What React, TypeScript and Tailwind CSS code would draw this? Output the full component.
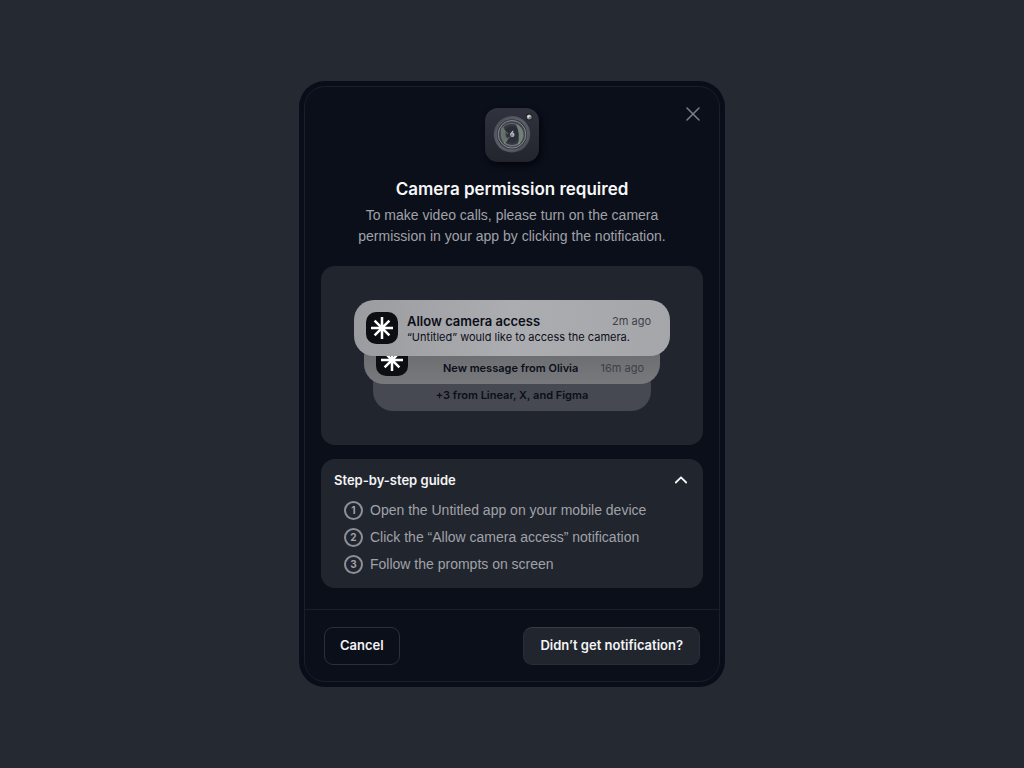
import { useState } from "react";

const steps = [
  "Open the Untitled app on your mobile device",
  "Click the “Allow camera access” notification",
  "Follow the prompts on screen",
];

function CameraIcon() {
  return (
    <svg viewBox="0 0 54 54" className="size-full" aria-hidden="true">
      <defs>
        <linearGradient id="cam-ring" x1="0" y1="0" x2="1" y2="1">
          <stop offset="0" stopColor="#464954" />
          <stop offset="0.5" stopColor="#5c606a" />
          <stop offset="1" stopColor="#444751" />
        </linearGradient>
        <radialGradient id="cam-glass">
          <stop offset="0" stopColor="#5d616c" />
          <stop offset="0.5" stopColor="#2b2e37" />
          <stop offset="1" stopColor="#454a52" />
        </radialGradient>
        <radialGradient id="cam-flash" cx="0.4" cy="0.4">
          <stop offset="0" stopColor="#f1f1ee" />
          <stop offset="1" stopColor="#85878a" />
        </radialGradient>
      </defs>
      <circle cx="27" cy="26.300" r="18.200" fill="url(#cam-ring)" />
      <circle cx="27" cy="26.300" r="15.800" fill="#343740" stroke="#6a6f78" strokeWidth="0.700" />
      <circle cx="27" cy="26.300" r="13.800" fill="url(#cam-glass)" stroke="#858b8b" strokeWidth="1" />
      <path d="M16.500 19.500C14.800 25 15.500 31.500 19.500 35.500C21.500 34.500 22.500 32 23 30L18.500 19Z" fill="#839184" opacity="0.650" />
      <path d="M31 16C36.500 18 38.800 23 38.600 27.500C38 32 36 34.500 33 36.500C34.500 30 34 23 31 16Z" fill="#88988b" opacity="0.750" />
      <path d="M18 19C22 14.500 30 14.500 34 18" fill="none" stroke="#8b8d98" strokeWidth="1" opacity="0.500" />
      <path d="M19 34.500C23 38.600 31 38.600 35 34.500" fill="none" stroke="#9a9d9c" strokeWidth="1.300" opacity="0.600" />
      <circle cx="27" cy="25.800" r="6.500" fill="#272a33" opacity="0.800" />
      <path d="M18.500 22L23 26M20.500 33L24.500 29" stroke="#7c808a" strokeWidth="1.200" opacity="0.600" />
      <path d="M27.800 23.300L25.800 26" stroke="#c4c6ce" strokeWidth="1.200" strokeLinecap="round" />
      <circle cx="27.300" cy="26.800" r="2.200" fill="#b0b2bc" />
      <circle cx="26.900" cy="27" r="0.700" fill="#454854" />
      <circle cx="44.200" cy="8.900" r="3.300" fill="#191b22" />
      <circle cx="44.200" cy="8.900" r="2.500" fill="url(#cam-flash)" />
      <circle cx="44.800" cy="9.700" r="0.700" fill="#57595d" />
    </svg>
  );
}

function AppLogo() {
  return (
    <span className="flex size-8 shrink-0 items-center justify-center rounded-[10px] bg-[#0d0e12]">
      <svg viewBox="0 0 22 22" className="size-[22px]" stroke="#fff" strokeWidth="2.500" aria-hidden="true">
        <path d="M11 0V22M0 11H22M3.600 3.600L18.400 18.400M18.400 3.600L3.600 18.400" />
      </svg>
    </span>
  );
}

export default function App() {
  const [open, setOpen] = useState(true);

  return (
    <main className="flex min-h-screen items-center justify-center bg-[#252932] font-['Inter',sans-serif]">
      <section
        role="dialog"
        aria-labelledby="dialog-title"
        className="w-full max-w-[426px] rounded-[26px] bg-[#090d19] p-[5px]"
      >
        <div className="rounded-[21px] border border-[#1b1f2a] bg-[#0b0f1a]">
          <div className="relative px-4 pt-[21px] pb-[21px]">
            <button
              type="button"
              aria-label="Close"
              className="absolute top-[15px] right-3.5 flex size-6 items-center justify-center text-[#7c7f88]"
            >
              <svg viewBox="0 0 14 14" className="size-3.5" stroke="currentColor" strokeWidth="1.500" strokeLinecap="round" aria-hidden="true">
                <path d="M1 1L13 13M13 1L1 13" />
              </svg>
            </button>

            <header className="flex flex-col items-center text-center">
              <div className="size-[54px] rounded-[13px] bg-linear-to-b from-[#30333d] to-[#22252e] shadow-[2px_3px_6px_#03050b]">
                <CameraIcon />
              </div>
              <h1 id="dialog-title" className="mt-[15px] text-[17px] leading-6 font-semibold text-[#f7f7f8]">
                Camera permission required
              </h1>
              <p className="mt-1 max-w-[340px] font-['Liberation_Sans',sans-serif] text-[14px] leading-[21px] text-[#a0a2a8]">
                To make video calls, please turn on the camera permission in your app by clicking the notification.
              </p>
            </header>

            <div className="mt-[19px] flex flex-col items-center rounded-[14px] bg-[#21252e] px-8 py-[34px]">
              <article className="relative z-20 flex h-14 w-full max-w-[316px] items-center gap-[9px] rounded-[20px] bg-linear-to-r from-[#9b9ca0] via-[#acadb0] to-[#a5a6aa] pr-[19px] pl-3 text-[#0b0e19]">
                <AppLogo />
                <div className="min-w-0 flex-1">
                  <div className="flex items-center justify-between leading-[18px]">
                    <h2 className="text-[13px] font-semibold">Allow camera access</h2>
                    <time className="text-[11px] text-[#3d404a]">2m ago</time>
                  </div>
                  <p className="text-[11px] leading-[15px] whitespace-nowrap">“Untitled” would like to access the camera.</p>
                </div>
              </article>
              <article className="relative z-10 -mt-5 flex h-12 w-full max-w-[296px] items-end rounded-[20px] bg-linear-to-b from-[#65676a] to-[#77797d] pr-4 pb-2 pl-3 text-[#0b0e19]">
                <AppLogo />
                <div className="flex flex-1 items-center justify-between pl-[35px] leading-4">
                  <h2 className="text-[11px] font-semibold">New message from Olivia</h2>
                  <time className="text-[11px] text-[#3d404a]">16m ago</time>
                </div>
              </article>
              <p className="-mt-5 flex h-[47px] w-full max-w-[278px] items-end justify-center rounded-[20px] bg-[#464951] pb-2 text-[11px] leading-4 font-semibold text-[#0b0e19]">
                +3 from Linear, X, and Figma
              </p>
            </div>

            <div className="mt-3.5 rounded-[14px] bg-[#21252e] px-[13px] pt-3 pb-3.5">
              <h2>
                <button
                  type="button"
                  aria-expanded={open}
                  aria-controls="guide-steps"
                  onClick={() => setOpen(!open)}
                  className="flex w-full items-center justify-between pr-px text-[13px] leading-[18px] font-semibold text-[#f4f4f5]"
                >
                  Step-by-step guide
                  <svg
                    viewBox="0 0 16 16"
                    className={open ? "size-4" : "size-4 rotate-180"}
                    fill="none"
                    stroke="currentColor"
                    strokeWidth="1.800"
                    strokeLinecap="round"
                    strokeLinejoin="round"
                    aria-hidden="true"
                  >
                    <path d="M2.800 10.500L8 5.300L13.200 10.500" />
                  </svg>
                </button>
              </h2>
              {open && (
                <ol id="guide-steps" className="mt-3 flex flex-col gap-2 pl-2.5">
                  {steps.map((step, i) => (
                    <li key={step} className="flex items-center gap-[7px] font-['Liberation_Sans',sans-serif] text-[14px] leading-[19px] text-[#a0a2a8]">
                      <span className="flex size-[19px] items-center justify-center rounded-full border-2 border-[#8e9097] font-['Inter',sans-serif] text-[10px] font-bold">
                        {i + 1}
                      </span>
                      {step}
                    </li>
                  ))}
                </ol>
              )}
            </div>
          </div>

          <footer className="flex items-center justify-between border-t border-[#1b1f2a] px-[19px] pt-[17px] pb-4 text-[13px] font-semibold text-[#f4f4f5]">
            <button type="button" className="h-[38px] rounded-[9px] border border-[#2b2f39] px-[15px]">
              Cancel
            </button>
            <button
              type="button"
              className="h-[38px] rounded-[9px] border border-[#292d37] border-t-[#383c46] bg-[#21252e] px-4"
            >
              Didn’t get notification?
            </button>
          </footer>
        </div>
      </section>
    </main>
  );
}
